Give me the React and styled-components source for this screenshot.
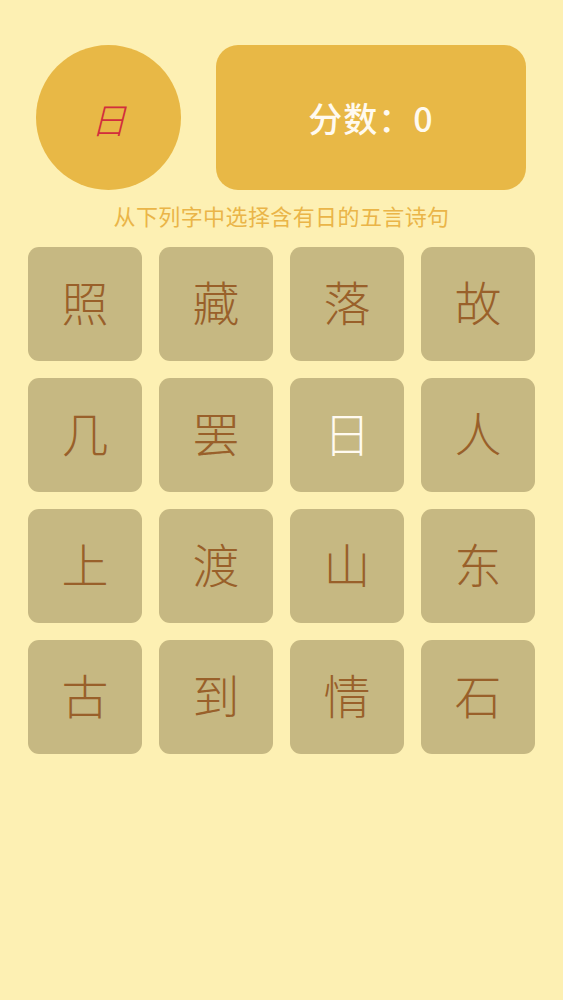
import React from "react";
import styled, { createGlobalStyle } from "styled-components";

const GlobalStyle = createGlobalStyle`
  html, body {
    margin: 0;
    padding: 0;
    background: #fdf0b3;
  }
`;

const Page = styled.div`
  min-height: 1000px;
  background: #fdf0b3;
  font-family: "Noto Sans CJK SC", "Noto Sans", sans-serif;
`;

const Header = styled.div`
  display: flex;
  align-items: center;
  gap: 35px;
  padding: 45px 37px 0 36px;
`;

const Target = styled.div`
  width: 145px;
  height: 145px;
  border-radius: 50%;
  background: #e8b846;
  display: flex;
  align-items: center;
  justify-content: center;
  color: #d22e3c;
  font-family: "Noto Sans CJK SC", serif;
  font-size: 36px;
  font-weight: 300;
  font-style: italic;
`;

const ScoreBox = styled.div`
  flex: 1;
  height: 145px;
  border-radius: 22px;
  background: #e8b846;
  display: flex;
  align-items: center;
  justify-content: center;
  color: #fffaf0;
  font-size: 34px;
  font-weight: 500;
  letter-spacing: 1px;
`;

const Hint = styled.div`
  margin-top: 11px;
  text-align: center;
  color: #eab548;
  font-size: 22px;
  line-height: 28px;
  letter-spacing: 0.4px;
`;

const Grid = styled.div`
  display: grid;
  grid-template-columns: repeat(4, 114px);
  grid-auto-rows: 114px;
  gap: 17px;
  padding: 18px 28px 0;
`;

const Cell = styled.div`
  box-sizing: border-box;
  padding-bottom: 8px;
  border-radius: 11px;
  background: #c6b882;
  display: flex;
  align-items: center;
  justify-content: center;
  color: ${(p) => (p.$picked ? "#fffaf0" : "#99602a")};
  font-size: 47px;
  font-weight: 300;
`;

const chars = [
  "照", "藏", "落", "故",
  "几", "罢", "日", "人",
  "上", "渡", "山", "东",
  "古", "到", "情", "石",
];

export default function App() {
  return (
    <Page>
      <GlobalStyle />
      <Header>
        <Target>日</Target>
        <ScoreBox>分数：0</ScoreBox>
      </Header>
      <Hint>从下列字中选择含有日的五言诗句</Hint>
      <Grid>
        {chars.map((c, i) => (
          <Cell key={i} $picked={c === "日"}>
            {c}
          </Cell>
        ))}
      </Grid>
    </Page>
  );
}
